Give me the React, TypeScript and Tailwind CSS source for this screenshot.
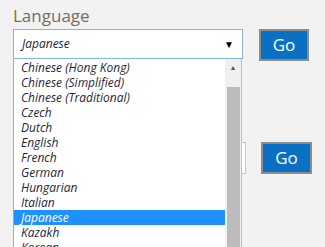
import React from "react";

const languages = [
  "Chinese (Hong Kong)",
  "Chinese (Simplified)",
  "Chinese (Traditional)",
  "Czech",
  "Dutch",
  "English",
  "French",
  "German",
  "Hungarian",
  "Italian",
  "Japanese",
  "Kazakh",
  "Korean",
];

function GoButton({ className = "" }: { className?: string }) {
  return (
    <button
      type="button"
      className={`flex h-[32px] items-center justify-center border-2 border-[#8c8c8c] bg-[#0a70c4] text-[17px] text-white ${className}`}
    >
      Go
    </button>
  );
}

export default function App() {
  return (
    <div
      className="relative h-[247px] w-[325px] overflow-hidden bg-[#f2f2f2]"
      style={{ fontFamily: '"Open Sans", "Noto Sans", sans-serif' }}
    >
      <div className="flex flex-col pl-[13px] pt-[3px]">
        <span className="text-[17px] leading-[26px] text-[#786c64]">Language</span>
        <div className="flex items-start">
          <div className="flex h-[30px] w-[230px] items-center justify-between border border-[#86b3e3] bg-white pl-[8px] pr-[8px]">
            <span className="text-[12px] italic text-[#1f1f3a]">Japanese</span>
            <span className="text-[10px] leading-none text-black">▼</span>
          </div>
          <GoButton className="ml-[16px] w-[50px]" />
        </div>
        <div className="mt-[81px] flex items-start">
          <div className="h-[32px] w-[233px] border border-[#c8c8c8] bg-white" />
          <GoButton className="ml-[15px] w-[51px]" />
        </div>
      </div>

      <div className="absolute left-[13px] top-[59px] flex h-[200px] w-[229px] border border-t-0 border-[#a9a9a9] border-r-[#a6c4e4] bg-white">
        <ul className="flex-1 pt-px">
          {languages.map((l) => (
            <li
              key={l}
              className={`h-[15px] overflow-hidden pl-[7px] text-[12px] italic leading-[15px] ${
                l === "Japanese" ? "bg-[#1e90ff] text-white" : "text-[#1f1f3a]"
              }`}
            >
              {l}
            </li>
          ))}
        </ul>
        <div className="flex w-[16px] flex-col items-center bg-[#f0f0f0]">
          <span className="mt-[5px] text-[7px] leading-none text-[#555]">▲</span>
          <div className="mt-[16px] h-[200px] w-[13px] bg-[#bcbcbc]" />
        </div>
      </div>
    </div>
  );
}
